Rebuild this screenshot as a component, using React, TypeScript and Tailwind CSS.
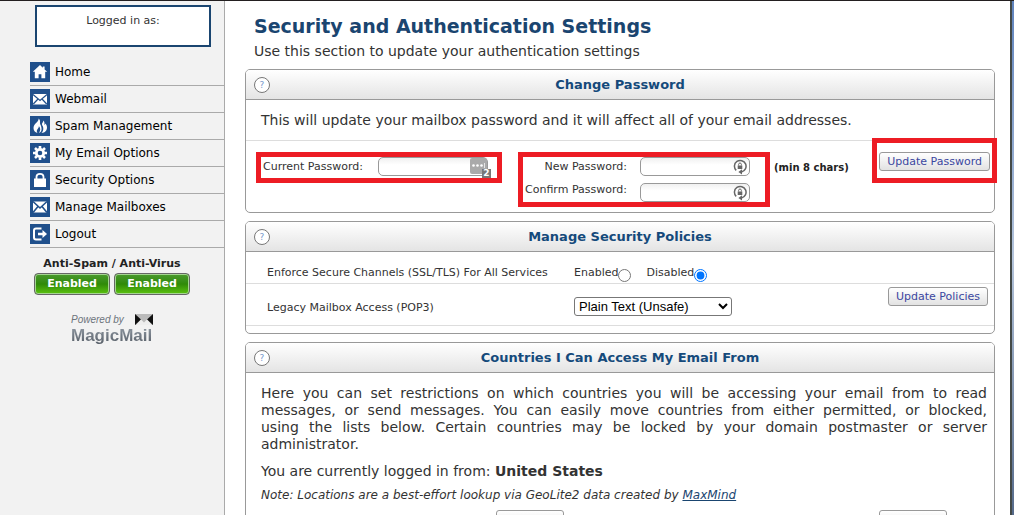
import { ReactNode, useState } from "react";
import clsx from "clsx";

type PanelProps = {
  title: string;
  className?: string;
  children: ReactNode;
};

type NavItem = {
  label: string;
  icon: ReactNode;
};

const navItems: NavItem[] = [
  {
    label: "Home",
    icon: <path fill="#fff" d="M10 3 2.8 9.8h2v6.4h3.8v-4h2.8v4h3.8V9.8h2L14.6 7.4V4.6h-1.8v1.1z" />,
  },
  {
    label: "Webmail",
    icon: (
      <>
        <path fill="#fff" d="M3 5h14v10.500H3z" />
        <path fill="none" stroke="#20508c" strokeWidth="1.2" d="m3 5.500 7 6 7-6M3.300 15l4.700-5M16.700 15 12 10" />
      </>
    ),
  },
  {
    label: "Spam Management",
    icon: (
      <>
        <path fill="#fff" d="M8.500 2.500c1 3-5 5-5 9.500 0 2.500 1.500 4.500 4 5-1-1.500-1-3 .5-4.500.8-1 1-1.500.8-2.500 1.800 1.500 2 4.500.2 7 2-.8 2.800-2.500 2.500-5C11.200 9 9.500 8 10 6c.2-1.500-.3-2.800-1.500-3.500z" />
        <path fill="#fff" d="M13.500 4.500c-.3 2-1.800 2.500-1.500 4 .3 1.300 1.500 2 1.300 4.500-.1 1.700-.8 3-1.800 4 3.500-.3 5.500-2.500 5.500-5.500 0-2-.8-3.200-1.800-4-.1.800-.3 1.300-.8 1.500.3-1.700.1-3.500-.9-4.500z" />
      </>
    ),
  },
  {
    label: "My Email Options",
    icon: (
      <>
        <circle cx="10" cy="10" r="3.700" fill="none" stroke="#fff" strokeWidth="2.800" />
        <path stroke="#fff" strokeWidth="2.600" d="M10 3v2.500M10 14.500V17M3 10h2.500M14.500 10H17M5 5l1.800 1.800M13.200 13.200 15 15M15 5l-1.800 1.800M6.800 13.200 5 15" />
      </>
    ),
  },
  {
    label: "Security Options",
    icon: (
      <>
        <path fill="#fff" d="M4 8.500h12V17H4z" />
        <path fill="none" stroke="#fff" strokeWidth="1.800" d="M6.500 9.500V6.800c0-2 1.500-3 3.500-3s3.500 1 3.500 3v2.700" />
      </>
    ),
  },
  {
    label: "Manage Mailboxes",
    icon: (
      <>
        <path fill="#fff" d="M3 4.500h14v11H3z" />
        <path fill="none" stroke="#20508c" strokeWidth="1.600" d="m3 4.500 7 6.500 7-6.500M3 15.500l5-6M17 15.500l-5-6" />
      </>
    ),
  },
  {
    label: "Logout",
    icon: (
      <>
        <path fill="none" stroke="#fff" strokeWidth="2" d="M11.500 4.500H6C4.800 4.500 4 5.300 4 6.500v7c0 1.200.8 2 2 2h5.500" />
        <path fill="#fff" d="M8 8.700h4.500V6L17 10l-4.500 4v-2.700H8z" />
      </>
    ),
  },
];

const countriesIntro = [
  "Here you can set restrictions on which countries you will be accessing your email from to read",
  "messages, or send messages. You can easily move countries from either permitted, or blocked,",
  "using the lists below. Certain countries may be locked by your domain postmaster or server",
];

const buttonClass =
  "h-[19px] shrink-0 rounded-[3px] border border-[#999] bg-linear-to-b from-white to-[#e2e2e2] px-[7px] text-[11px] leading-[16px] whitespace-nowrap text-[#3b47a0]";

const fieldClass =
  "block h-[19px] w-[110px] rounded-[5px] border border-[#999] bg-linear-to-b from-[#f0f0f0] to-white to-40% pl-1 pr-6 text-[11px] outline-none";

function Panel({ title, className, children }: PanelProps) {
  return (
    <section className={clsx("rounded-[5px] border border-[#999] bg-white", className)}>
      <header className="flex h-[30px] items-center rounded-t-[4px] border-b border-[#999] bg-linear-to-b from-white to-[#e4e4e4] px-2">
        <button
          type="button"
          aria-label={`Help: ${title}`}
          className="h-4 w-4 rounded-full border border-[#777] bg-white text-[9px] leading-[14px] text-[#7799cc]"
        >
          ?
        </button>
        <h2 className="flex-1 pt-px pr-4 text-center text-[13px] leading-4 font-bold text-[#154a7b]">{title}</h2>
      </header>
      {children}
    </section>
  );
}

// reload arrow with a lock, shown inside the new password fields
function GenerateIcon() {
  return (
    <svg viewBox="0 0 14 16" className="absolute top-[2px] right-[3px] h-4 w-[14px]">
      <path fill="none" stroke="#666" strokeWidth="1.500" d="M3.200 11.400A5.800 5.800 0 1 1 8.500 12.900" />
      <path fill="#666" d="M9 10.200v5.400L5.400 13z" />
      <path fill="#666" d="M4.700 6.500h4.600V10H4.700z" />
      <path fill="none" stroke="#666" d="M5.600 6.500V5.400c0-1.900 2.800-1.900 2.800 0v1.100" />
    </svg>
  );
}

function Sidebar() {
  return (
    <aside className="w-[225px] shrink-0 border-r border-[#aaa] bg-[#f2f2f2] pt-1 pl-[30px]">
      <div className="ml-[5px] h-[42px] w-[176px] border-2 border-[#1a4570] bg-white pt-[6px] text-center text-[11px] leading-4 text-[#333]">
        Logged in as:
      </div>
      <nav className="mt-3">
        <ul>
          {navItems.map((item) => (
            <li key={item.label} className="border-b border-[#aaa] py-[3px]">
              <a href="#" className="flex h-5 items-center gap-[5px] text-[12px] text-black">
                <svg viewBox="0 0 20 20" className="h-5 w-5 bg-[#20508c]">
                  {item.icon}
                </svg>
                {item.label}
              </a>
            </li>
          ))}
        </ul>
      </nav>
      <div className="mt-2 mr-[30px] text-center">
        <p className="text-[11px] leading-4 font-bold text-[#222]">Anti-Spam / Anti-Virus</p>
        <div className="mt-[1px] flex justify-center gap-1">
          {["Anti-Spam", "Anti-Virus"].map((name) => (
            <button
              key={name}
              type="button"
              aria-label={`${name} Enabled`}
              className="h-[22px] w-[76px] rounded-[4px] border border-[#666] bg-linear-to-b from-[#4a9a2c] via-[#2f8a08] to-[#5cc410] text-[11px] leading-[18px] font-bold text-white inset-ring inset-ring-[#a5d592]"
            >
              Enabled
            </button>
          ))}
        </div>
        <div className="mx-auto mt-[18px] w-[82px] font-['Liberation_Sans'] text-[#6d747c]">
          <div className="flex h-[13px] items-center justify-between">
            <span className="text-[10px] whitespace-nowrap italic">Powered by</span>
            <svg viewBox="0 0 18 11" className="h-[11px] w-[18px]">
              <path fill="#bbb" d="M0 0h18v11H0z" />
              <path fill="#111" d="m0 0 6 5.500L0 11zM18 0l-6 5.500 6 5.500z" />
              <path fill="#eee" d="m6 5.500 3 3 3-3 5 5.500H1z" />
            </svg>
          </div>
          <p className="bg-linear-to-b from-[#929ba5] to-[#535a63] bg-clip-text text-left text-[17px] leading-5 font-bold text-transparent">
            MagicMail
          </p>
        </div>
      </div>
    </aside>
  );
}

function PasswordForm() {
  return (
    <form className="flex h-[72px] items-start border-t border-[#ddd] pt-[11px] pr-1 pl-[10px]" onSubmit={(e) => e.preventDefault()}>
      <div className="flex h-[31px] w-[246px] shrink-0 items-start justify-between border-[5px] border-[#ed1c24] pr-[9px] pl-[2px]">
        <label htmlFor="current-password" className="text-[11px] leading-5 whitespace-nowrap">
          Current Password:
        </label>
        <div className="relative">
          <input id="current-password" type="password" className={fieldClass} />
          <svg viewBox="0 0 17 16" className="absolute top-[1px] right-[1px] h-4 w-[17px]">
            <rect width="17" height="16" rx="2" fill="#aaa" />
            <circle cx="3.500" cy="7.500" r="1.300" fill="#fff" />
            <circle cx="7.500" cy="7.500" r="1.300" fill="#fff" />
            <circle cx="11.500" cy="7.500" r="1.300" fill="#fff" />
            <path stroke="#fff" strokeWidth=".7" d="M14.500 5v5" />
          </svg>
          <span className="absolute top-3 right-[-3px] h-[9px] w-[9px] bg-[#777] text-center text-[9px] leading-[9px] font-bold text-white">
            2
          </span>
        </div>
      </div>
      <div className="ml-4 grid h-[55px] w-[252px] shrink-0 grid-cols-[1fr_auto] content-start gap-x-[13px] gap-y-[6px] border-[5px] border-[#ed1c24] pr-[15px]">
        <label htmlFor="new-password" className="text-right text-[11px] leading-5">
          New Password:
        </label>
        <div className="relative">
          <input id="new-password" type="password" className={fieldClass} />
          <GenerateIcon />
        </div>
        <label htmlFor="confirm-password" className="text-right text-[11px] leading-[14px] whitespace-nowrap">
          Confirm Password:
        </label>
        <div className="relative">
          <input id="confirm-password" type="password" className={fieldClass} />
          <GenerateIcon />
        </div>
      </div>
      <span className="ml-1 pt-2 text-[10px] leading-4 font-bold whitespace-nowrap text-[#222]">(min 8 chars)</span>
      <div className="relative ml-auto flex">
        <button type="submit" className={buttonClass}>
          Update Password
        </button>
        <div className="pointer-events-none absolute -top-[14px] -right-[7px] -bottom-3 -left-[7px] border-[5px] border-[#ed1c24]" />
      </div>
    </form>
  );
}

function PoliciesForm() {
  const [secure, setSecure] = useState("Disabled");

  return (
    <form className="pb-[7px] text-[11px]" onSubmit={(e) => e.preventDefault()}>
      <div className="flex h-8 items-center border-b border-[#ddd] pt-3 pl-[21px]">
        <span id="secure-label" className="w-[307px] shrink-0">Enforce Secure Channels (SSL/TLS) For All Services</span>
        <div role="radiogroup" aria-labelledby="secure-label" className="flex gap-[15px]">
          {["Enabled", "Disabled"].map((option) => (
            <label key={option} className="flex items-center">
              {option}
              <input
                type="radio"
                name="secure"
                value={option}
                checked={secure === option}
                onChange={() => setSecure(option)}
                className="mt-1 h-[13px] w-[13px]"
              />
            </label>
          ))}
        </div>
      </div>
      <div className="flex h-[42px] items-start border-b border-[#ddd] pr-[6px] pl-[21px]">
        <label htmlFor="pop3" className="w-[307px] shrink-0 pt-4 leading-4">
          Legacy Mailbox Access (POP3)
        </label>
        <select
          id="pop3"
          className="mt-[13px] h-[19px] w-[158px] rounded-[3px] border border-[#777] bg-white font-['Liberation_Sans'] text-[13px] text-black"
        >
          <option>Plain Text (Unsafe)</option>
          <option>Encrypted Only</option>
          <option>Disabled</option>
        </select>
        <button type="submit" className={clsx(buttonClass, "mt-[3px] ml-auto")}>
          Update Policies
        </button>
      </div>
    </form>
  );
}

function App() {
  return (
    <div className="flex h-screen overflow-hidden border-t border-[#231f20] bg-white font-['DejaVu_Sans',Verdana,sans-serif] text-[#333]">
      <Sidebar />
      <main className="min-w-0 flex-1 pt-[13px] pr-[15px] pl-5">
        <h1 className="pl-[9px] text-[19px] leading-6 font-bold text-[#1a4570]">Security and Authentication Settings</h1>
        <p className="pt-[3px] pl-[9px] text-[14px] leading-5">Use this section to update your authentication settings</p>

        <Panel title="Change Password" className="mt-2">
          <p className="h-10 pl-[15px] text-[14px] leading-10">
            This will update your mailbox password and it will affect all of your email addresses.
          </p>
          <PasswordForm />
        </Panel>

        <Panel title="Manage Security Policies" className="mt-2">
          <PoliciesForm />
        </Panel>

        <Panel title="Countries I Can Access My Email From" className="mt-2">
          <div className="pt-3 pr-[7px] pb-10 pl-[15px]">
            <p className="text-[14px] leading-[17px]">
              {countriesIntro.map((line) => (
                <span key={line} className="block text-justify [text-align-last:justify]">
                  {line}
                </span>
              ))}
              administrator.
            </p>
            <p className="mt-2 text-[14px] leading-5">
              You are currently logged in from: <b>United States</b>
            </p>
            <p className="mt-[6px] text-[12px] leading-4 italic">
              Note: Locations are a best-effort lookup via GeoLite2 data created by{" "}
              <a href="#" className="text-[#1a4570] underline">
                MaxMind
              </a>
            </p>
            <div className="mt-[7px] flex justify-between pr-10 pl-[235px]">
              <button type="button" aria-label="Permit countries" className={clsx(buttonClass, "w-[68px]")} />
              <button type="button" aria-label="Block countries" className={clsx(buttonClass, "w-[68px]")} />
            </div>
          </div>
        </Panel>
      </main>
      <div className="w-1 shrink-0 border-l-2 border-[#444a48] bg-linear-to-b from-[#5f83bd] via-[#b5c5dc] to-[#556a8a]" />
    </div>
  );
}

export default App;
